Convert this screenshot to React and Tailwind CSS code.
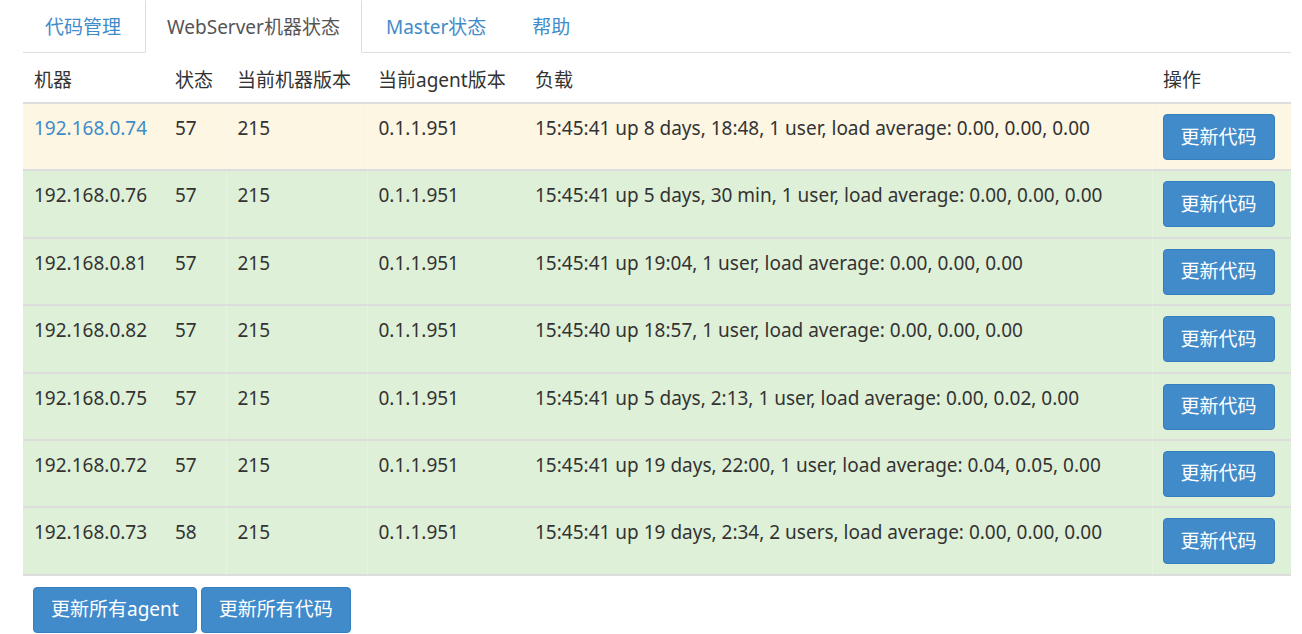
import React from 'react';

const rows = [
  { ip: '192.168.0.74', status: '57', ver: '215', agent: '0.1.1.951', load: '15:45:41 up 8 days, 18:48, 1 user, load average: 0.00, 0.00, 0.00', warn: true },
  { ip: '192.168.0.76', status: '57', ver: '215', agent: '0.1.1.951', load: '15:45:41 up 5 days, 30 min, 1 user, load average: 0.00, 0.00, 0.00' },
  { ip: '192.168.0.81', status: '57', ver: '215', agent: '0.1.1.951', load: '15:45:41 up 19:04, 1 user, load average: 0.00, 0.00, 0.00' },
  { ip: '192.168.0.82', status: '57', ver: '215', agent: '0.1.1.951', load: '15:45:40 up 18:57, 1 user, load average: 0.00, 0.00, 0.00' },
  { ip: '192.168.0.75', status: '57', ver: '215', agent: '0.1.1.951', load: '15:45:41 up 5 days, 2:13, 1 user, load average: 0.00, 0.02, 0.00' },
  { ip: '192.168.0.72', status: '57', ver: '215', agent: '0.1.1.951', load: '15:45:41 up 19 days, 22:00, 1 user, load average: 0.04, 0.05, 0.00' },
  { ip: '192.168.0.73', status: '58', ver: '215', agent: '0.1.1.951', load: '15:45:41 up 19 days, 2:34, 2 users, load average: 0.00, 0.00, 0.00' },
];

const tabs = ['代码管理', 'WebServer机器状态', 'Master状态', '帮助'];

const Button = ({ children }) => (
  <button className="h-[46px] px-[17px] bg-[#428bca] border border-[#357ebd] rounded-[4px] text-white text-[19px] leading-none whitespace-nowrap">
    {children}
  </button>
);

const App = () => {
  return (
    <div
      className="min-h-screen bg-white text-[#333] text-[19px] leading-[26px]"
      style={{ fontFamily: '"Noto Sans", "Noto Sans CJK SC", sans-serif' }}
    >
      <div className="pl-[23px] pr-[11px]">
        {/* tabs */}
        <div className="flex h-[53px] border-b border-[#ddd]">
          {tabs.map((t, i) => (
            <div
              key={t}
              className={`mr-[2px] px-[21px] flex items-center -mb-px border ${
                i === 1
                  ? 'border-[#ddd] border-t-transparent border-b-white bg-white text-[#555]'
                  : 'border-transparent text-[#428bca]'
              }`}
            >
              <span>{t}</span>
            </div>
          ))}
        </div>

        {/* table */}
        <table className="w-full border-collapse table-fixed">
          <colgroup>
            <col className="w-[141px]" />
            <col className="w-[62px]" />
            <col className="w-[141px]" />
            <col className="w-[157px]" />
            <col className="w-[628px]" />
            <col />
          </colgroup>
          <thead>
            <tr className="border-b-2 border-[#ddd]">
              {['机器', '状态', '当前机器版本', '当前agent版本', '负载', '操作'].map((h) => (
                <th key={h} className="text-left font-normal px-[11px] pt-[14px] pb-[9px] align-bottom whitespace-nowrap">
                  {h}
                </th>
              ))}
            </tr>
          </thead>
          <tbody>
            {rows.map((r) => {
              const bg = r.warn ? 'bg-[#fcf6e3]' : 'bg-[#dff0d8]';
              const sep = r.warn ? 'border-l border-[#fdf8ea]' : 'border-l border-[#e5f3df]';
              return (
                <tr key={r.ip} className={`${bg} border-b-2 border-[#ddd] h-[67.4px]`}>
                  <td className={`px-[11px] pt-[11px] align-top whitespace-nowrap ${r.warn ? 'text-[#428bca]' : ''}`}>{r.ip}</td>
                  <td className="px-[11px] pt-[11px] align-top">{r.status}</td>
                  <td className={`px-[11px] pt-[11px] align-top ${sep}`}>{r.ver}</td>
                  <td className={`px-[11px] pt-[11px] align-top ${sep}`}>{r.agent}</td>
                  <td className="px-[11px] pt-[11px] align-top whitespace-nowrap">{r.load}</td>
                  <td className={`px-[10px] pt-[10px] align-top ${sep}`}>
                    <Button>更新代码</Button>
                  </td>
                </tr>
              );
            })}
          </tbody>
        </table>

        <div className="flex gap-[4px] pl-[10px] pt-[11px]">
          <Button>更新所有agent</Button>
          <Button>更新所有代码</Button>
        </div>
      </div>
    </div>
  );
};

export default App;
